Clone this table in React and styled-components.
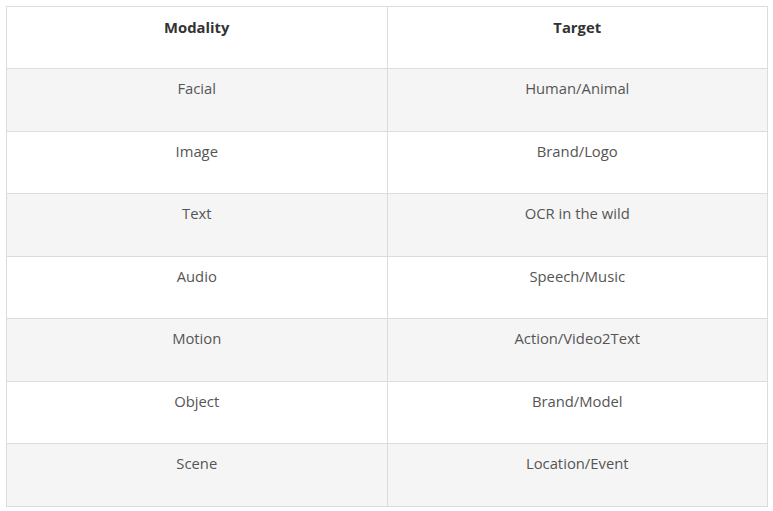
import React from 'react'
import styled, { createGlobalStyle } from 'styled-components'

const GlobalStyle = createGlobalStyle`
  body {
    margin: 0;
    background: #ffffff;
    font-family: "Open Sans", "Noto Sans", sans-serif;
  }
`

const Page = styled.div`
  padding: 6px 5px 0 6px;
`

const Table = styled.table`
  width: 762px;
  border-collapse: collapse;
  table-layout: fixed;
  border: 1px solid #dcdcdc;
`

const Row = styled.tr`
  background: ${p => (p.$striped ? '#f5f5f5' : '#ffffff')};
`

const HeadCell = styled.th`
  height: 62px;
  box-sizing: border-box;
  padding: 9px 8px 0;
  vertical-align: top;
  text-align: center;
  font-size: 14.8px;
  font-weight: 700;
  line-height: 22px;
  color: #333333;
  border: 1px solid #dcdcdc;
`

const Cell = styled.td`
  height: 62.5px;
  box-sizing: border-box;
  padding: 8px 8px 0;
  vertical-align: top;
  text-align: center;
  font-size: 14.8px;
  line-height: 22px;
  color: #555555;
  border: 1px solid #dcdcdc;
`

const rows = [
  ['Facial', 'Human/Animal'],
  ['Image', 'Brand/Logo'],
  ['Text', 'OCR in the wild'],
  ['Audio', 'Speech/Music'],
  ['Motion', 'Action/Video2Text'],
  ['Object', 'Brand/Model'],
  ['Scene', 'Location/Event'],
]

const App = () => {
  return (
    <Page>
      <GlobalStyle />
      <Table>
        <thead>
          <Row>
            <HeadCell>Modality</HeadCell>
            <HeadCell>Target</HeadCell>
          </Row>
        </thead>
        <tbody>
          {rows.map(([modality, target], i) => (
            <Row key={modality} $striped={i % 2 === 0}>
              <Cell>{modality}</Cell>
              <Cell>{target}</Cell>
            </Row>
          ))}
        </tbody>
      </Table>
    </Page>
  )
}

export default App
